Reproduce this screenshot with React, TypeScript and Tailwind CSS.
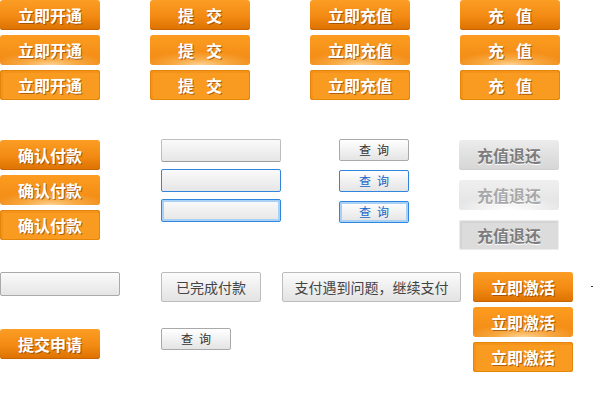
const font = { fontFamily: '"Noto Sans CJK SC", "Noto Sans", sans-serif' };

type State = 'normal' | 'hover' | 'active';

const orange: Record<State, string> = {
  normal:
    'bg-[linear-gradient(#fc9d24,#f28a13_55%,#dc7100)] shadow-[inset_0_-1px_0_#c96400]',
  hover:
    'bg-[radial-gradient(ellipse_60%_45%_at_50%_100%,#fdd393_0%,rgba(252,190,100,0.6)_45%,rgba(250,160,50,0)_100%),linear-gradient(#fd9c20,#f08812)]',
  active:
    'bg-[#f99b20] shadow-[inset_0_0_0_1px_#e4860a,inset_1px_1px_0_2px_#f4921a]',
};

const grey: Record<State, string> = {
  normal:
    'bg-[linear-gradient(#ececec,#dedede_60%,#d6d6d6)] text-[#7c7c7c] shadow-[inset_0_-1px_0_#cfcfcf]',
  hover:
    'bg-[radial-gradient(ellipse_60%_45%_at_50%_100%,#ffffff_0%,rgba(255,255,255,0)_100%),linear-gradient(#efefef,#e2e2e2)] text-[#a8a8a8]',
  active:
    'bg-[#dcdcdc] text-[#7c7c7c] shadow-[inset_0_0_0_1px_#ececec,inset_1px_1px_0_2px_#d4d4d4]',
};

// labels with a gap between characters ("提 交") are given as arrays
function Label({ label, gap }: { label: string | string[]; gap: string }) {
  if (typeof label === 'string') return <>{label}</>;
  return (
    <span className={`flex ${gap}`}>
      {label.map((c) => (
        <span key={c}>{c}</span>
      ))}
    </span>
  );
}

function OrangeBtn({ label, state = 'normal' }: { label: string | string[]; state?: State }) {
  return (
    <div
      className={`w-[100px] h-[30px] rounded-[3px] flex items-center justify-center text-white text-[16px] font-bold [text-shadow:1px_1px_0_rgba(110,45,0,0.55)] ${orange[state]}`}
      style={font}
    >
      <Label label={label} gap="gap-[12px]" />
    </div>
  );
}

function GreyBtn({ label, state = 'normal' }: { label: string; state?: State }) {
  return (
    <div
      className={`w-[100px] h-[30px] rounded-[3px] flex items-center justify-center text-[16px] font-bold [text-shadow:0_1px_0_#ffffff] ${grey[state]}`}
      style={font}
    >
      {label}
    </div>
  );
}

function Field({ state = 'normal' }: { state?: State }) {
  const cls =
    state === 'normal'
      ? 'border-[#bdbdbd] border-b-[#9c9c9c]'
      : state === 'hover'
        ? 'border-[#2f86dc]'
        : 'border-[#2f86dc] shadow-[inset_0_0_0_2px_#a9d1f6]';
  return (
    <div
      className={`w-[120px] h-[23px] rounded-[2px] border bg-[linear-gradient(#fafafa,#e6e6e6)] ${cls}`}
    />
  );
}

function QueryBtn({ state = 'normal' }: { state?: State }) {
  const cls =
    state === 'normal'
      ? 'border-[#a9a9a9] text-[#333]'
      : state === 'hover'
        ? 'border-[#2f86dc] text-[#1466c8]'
        : 'border-[#2f86dc] text-[#1466c8] shadow-[inset_0_0_0_2px_#a9d1f6]';
  return (
    <div
      className={`w-[70px] h-[22px] rounded-[2px] border bg-[linear-gradient(#ffffff,#e4e4e4)] flex items-center justify-center text-[12px] ${cls}`}
      style={font}
    >
      <Label label={['查', '询']} gap="gap-[6px]" />
    </div>
  );
}

function PlainBtn({ label, w }: { label: string; w: string }) {
  return (
    <div
      className={`${w} h-[30px] rounded-[2px] border border-[#bcbcbc] bg-[linear-gradient(#fbfbfb,#e3e3e3)] flex items-center justify-center text-[14px] text-[#444]`}
      style={font}
    >
      {label}
    </div>
  );
}

const states: State[] = ['normal', 'hover', 'active'];

const topCols: { label: string | string[]; ml: string }[] = [
  { label: '立即开通', ml: 'ml-0' },
  { label: ['提', '交'], ml: 'ml-[50px]' },
  { label: '立即充值', ml: 'ml-[60px]' },
  { label: ['充', '值'], ml: 'ml-[50px]' },
];

export default function App() {
  return (
    <div className="w-[593px] h-[406px] bg-white overflow-hidden relative">
      {/* group 1 */}
      <div className="flex">
        {topCols.map((col, i) => (
          <div key={i} className={`flex flex-col gap-[5px] ${col.ml}`}>
            {states.map((s) => (
              <OrangeBtn key={s} label={col.label} state={s} />
            ))}
          </div>
        ))}
      </div>

      {/* group 2 */}
      <div className="flex mt-[39px] items-start">
        <div className="flex flex-col gap-[5px] mt-px">
          {states.map((s) => (
            <OrangeBtn key={s} label="确认付款" state={s} />
          ))}
        </div>
        <div className="flex flex-col gap-[7px] ml-[61px]">
          {states.map((s) => (
            <Field key={s} state={s} />
          ))}
        </div>
        <div className="flex flex-col gap-[9px] ml-[58px]">
          {states.map((s) => (
            <QueryBtn key={s} state={s} />
          ))}
        </div>
        <div className="flex flex-col gap-[10px] ml-[50px] mt-px">
          {states.map((s) => (
            <GreyBtn key={s} label="充值退还" state={s} />
          ))}
        </div>
      </div>

      {/* group 3 */}
      <div className="flex mt-[22px] items-start">
        <div className="flex flex-col">
          <div className="w-[120px] h-[24px] rounded-[2px] border border-[#aaa] bg-[linear-gradient(#fafafa,#e5e5e5)]" />
          <div className="mt-[33px]">
            <OrangeBtn label="提交申请" />
          </div>
        </div>
        <div className="flex flex-col ml-[41px]">
          <PlainBtn label="已完成付款" w="w-[100px]" />
          <div className="mt-[26px]">
            <QueryBtn />
          </div>
        </div>
        <div className="ml-[21px]">
          <PlainBtn label="支付遇到问题，继续支付" w="w-[179px]" />
        </div>
        <div className="flex flex-col gap-[5px] ml-[12px]">
          {states.map((s) => (
            <OrangeBtn key={s} label="立即激活" state={s} />
          ))}
        </div>
        <div className="w-[3px] h-px bg-[#333] ml-[18px] mt-[14px]" />
      </div>
    </div>
  );
}
